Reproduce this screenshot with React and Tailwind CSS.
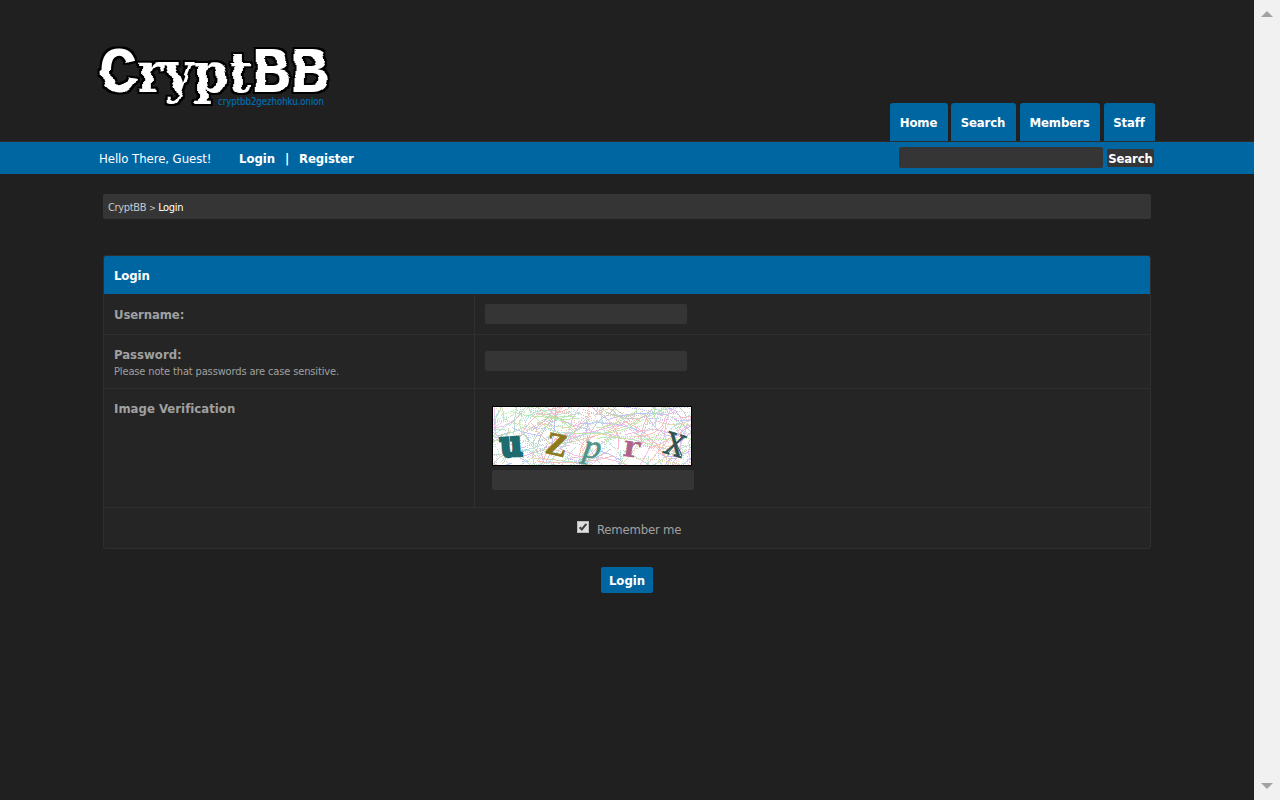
import React from "react";

const NAV = [
  { label: "Home", box: "-mr-px w-[58px]" },
  { label: "Search", box: "w-[65px]" },
  { label: "Members", box: "w-[80px]" },
  { label: "Staff", box: "w-[51px]" },
];

function Logo() {
  return (
    <svg width="250" height="80" viewBox="0 0 250 80" className="block overflow-visible">
      <defs>
        <filter id="glitch" filterUnits="userSpaceOnUse" x="0" y="0" width="250" height="80" colorInterpolationFilters="sRGB">
          <feTurbulence type="fractalNoise" baseFrequency="0.008 0.13" numOctaves="1" seed="8" result="noise" />
          <feComponentTransfer in="noise" result="n">
            <feFuncR type="discrete" tableValues="0.1 0.1 0.2 0.35 0.5 0.65 0.8 0.9 0.9" />
            <feFuncA type="linear" slope="0" intercept="1" />
          </feComponentTransfer>
          <feDisplacementMap in="SourceGraphic" in2="n" scale="8" xChannelSelector="R" yChannelSelector="A" result="shifted" />
          <feOffset in="shifted" dy="4" result="d" />
          <feMorphology in="d" operator="dilate" radius="2" result="wide" />
          <feFlood floodColor="#000" />
          <feComposite in2="wide" operator="in" result="outline" />
          <feMerge>
            <feMergeNode in="outline" />
            <feMergeNode in="d" />
          </feMerge>
        </filter>
      </defs>
      <text x="9" y="57" filter="url(#glitch)" fill="#fff" fontFamily="'Liberation Mono', monospace" fontWeight="700" fontSize="65" textLength="230" lengthAdjust="spacingAndGlyphs">
        C<tspan fontFamily="'DejaVu Serif Condensed', 'DejaVu Serif', serif" fontSize="56">rypt</tspan>BB
      </text>
      <text x="128" y="70" fontSize="10" fill="#0070b4" stroke="#0066a2" strokeWidth="0.2" fontFamily="'DejaVu Sans Condensed', 'DejaVu Sans', sans-serif" textLength="106" lengthAdjust="spacingAndGlyphs">
        cryptbb2gezhohku.onion
      </text>
    </svg>
  );
}

function makeLines() {
  let s = 77;
  const r = () => {
    s = (s * 16807) % 2147483647;
    return s / 2147483647;
  };
  const colors = ["#f9bab6", "#b2e0c2", "#b9bef8", "#f0bae4", "#b2e2e2", "#e0d4a8", "#c4c4c4", "#b8eaa6"];
  const lines = [];
  for (let i = 0; i < 360; i++) {
    const x = r() * 240 - 20;
    const y = r() * 70 - 5;
    const a = r() * Math.PI * 2;
    const len = 20 + r() * 60;
    const dx = Math.cos(a) * len;
    const dy = Math.sin(a) * len * 0.7;
    lines.push({
      d: `M${x} ${y}q${dx / 2 - 16 + r() * 32} ${dy / 2 - 16 + r() * 32} ${dx} ${dy}`,
      c: colors[Math.floor(r() * colors.length)],
      dash: i % 2 === 0 ? "1 1" : undefined,
    });
  }
  return lines;
}
const LINES = makeLines();

function Captcha() {
  return (
    <svg width="200" height="60" viewBox="0 0 200 60" className="block bg-white">
      <g fill="none" strokeWidth="0.9" shapeRendering="crispEdges">
        {LINES.map((l, i) => <path key={i} d={l.d} stroke={l.c} strokeDasharray={l.dash} />)}
      </g>
      <g fontFamily="'DejaVu Serif', serif" fontWeight="700">
        <text x="8" y="50" fontSize="35" fill="#1c6c70" stroke="#1c6c70" strokeWidth="3.2" textLength="22" lengthAdjust="spacingAndGlyphs" transform="rotate(-4 19 40)">u</text>
        <text x="54" y="49" fontSize="32" fill="#8c7a1c" stroke="#8c7a1c" strokeWidth="0.8" textLength="21" lengthAdjust="spacingAndGlyphs" transform="rotate(12 64 40)" fontFamily="'Liberation Serif', serif">Z</text>
        <text x="91" y="52" fontSize="34" fill="#4f9489" stroke="#4f9489" strokeWidth="0.5" fontStyle="italic" fontWeight="400" textLength="18" lengthAdjust="spacingAndGlyphs" transform="rotate(9 100 45)" fontFamily="'Liberation Serif', serif">p</text>
        <text x="131" y="51" fontSize="30" fill="#ad638d" textLength="17" lengthAdjust="spacingAndGlyphs" transform="rotate(8 139 43)">r</text>
        <text x="173" y="50" fontSize="31" fill="#2f5353" stroke="#2f5353" strokeWidth="0.5" fontWeight="400" textLength="20" lengthAdjust="spacingAndGlyphs" transform="rotate(17 183 39)">X</text>
        <path d="M179 26l11 24M190 31l-15 17" stroke="#2f5353" strokeWidth="1" />
      </g>
      <rect x="0.5" y="0.5" width="199" height="59" fill="none" stroke="#000" />
    </svg>
  );
}

export default function App() {
  return (
    <div className="flex h-[800px] w-[1280px] overflow-hidden bg-[#202020] font-['DejaVu_Sans_Condensed','DejaVu_Sans',sans-serif] text-[13px] leading-4 text-[#a0a0a0]">
      <div className="w-[1254px] shrink-0">
        <header className="flex h-[141px] items-end justify-between pl-[90px] pr-[99px]">
          <div className="mb-[26px]"><Logo /></div>
          <nav className="flex gap-1">
            {NAV.map((n) => (
              <a key={n.label} className={`flex h-[38px] items-center justify-center rounded-t-[3px] bg-[#0066a2] pr-px pt-[2px] font-bold tracking-[-0.1px] text-white ${n.box}`}>{n.label}</a>
            ))}
          </nav>
        </header>

        <div className="flex h-[33px] items-center border-t border-[#2c2c2c] bg-[#0066a2] pl-[99px] pr-[100px] text-white">
          <span className="w-[140px] whitespace-nowrap pt-[2px] tracking-[-0.05px]">Hello There, Guest!</span>
          <span className="w-[46px] pt-[2px] font-bold">Login</span>
          <span className="w-[14px] pt-[2px] font-bold">|</span>
          <span className="pt-[2px] font-bold tracking-[-0.1px]">Register</span>
          <div className="ml-auto flex items-center gap-1">
            <div className="mb-px h-[21px] w-[204px] rounded-[2px] bg-[#353535]" />
            <button className="flex h-[18px] w-[47px] items-center justify-center rounded-[2px] bg-[#353535] pt-px font-bold tracking-[-0.1px]">Search</button>
          </div>
        </div>

        <main className="px-[103px] pt-5">
          <div className="flex h-[25px] items-center rounded-[2px] bg-[#353535] pl-[5px] pt-[2px] text-[11px] tracking-[-0.35px]">
            <span className="whitespace-pre text-[#c8c8c8]">CryptBB <span className="text-[9px]">&gt;</span> </span>
            <span className="text-white">Login</span>
          </div>

          <section className="mt-9 h-[294px] overflow-hidden rounded-[3px] border border-[#2f2f2f] bg-[#252525]">
            <div className="flex h-[38px] items-center bg-[#0066a2] pl-[10px] pt-px font-bold tracking-[-0.1px] text-white">Login</div>
            <div className="flex h-[41px] border-b border-[#2f2f2f]">
              <div className="w-[371px] border-r border-[#2f2f2f] pl-[10px] pt-[13px] font-bold tracking-[-0.1px]">Username:</div>
              <div className="flex items-center pl-[10px]"><div className="h-5 w-[202px] rounded-[2px] bg-[#353535]" /></div>
            </div>
            <div className="flex h-[54px] border-b border-[#2f2f2f]">
              <div className="w-[371px] border-r border-[#2f2f2f] pl-[10px] pt-3">
                <div className="font-bold">Password:</div>
                <div className="pt-px text-[11px] tracking-[-0.14px]">Please note that passwords are case sensitive.</div>
              </div>
              <div className="flex items-center pb-px pl-[10px]"><div className="h-5 w-[202px] rounded-[2px] bg-[#353535]" /></div>
            </div>
            <div className="flex h-[119px] border-b border-[#2f2f2f]">
              <div className="w-[371px] border-r border-[#2f2f2f] pl-[10px] pt-3 font-bold tracking-[0.03px]">Image Verification</div>
              <div className="pl-[17px] pt-[17px]">
                <Captcha />
                <div className="mt-1 h-5 w-[202px] rounded-[2px] bg-[#353535]" />
              </div>
            </div>
            <div className="flex pl-[473px] pt-[13px]">
              <svg width="12" height="12" viewBox="0 0 12 12">
                <rect width="12" height="12" rx="1" fill="#dedede" />
                <rect x="0.5" y="0.5" width="11" height="11" rx="1" fill="none" stroke="#b9b9b9" />
                <path d="M2.7 6.2 4.8 8.5 9.4 2.8" fill="none" stroke="#404040" strokeWidth="2.1" />
              </svg>
              <span className="pl-2 pt-px tracking-[-0.2px]">Remember me</span>
            </div>
          </section>

          <button className="mx-auto mt-[18px] flex h-[26px] w-[52px] items-center justify-center rounded-[2px] bg-[#0066a2] pt-px font-bold text-white">Login</button>
        </main>
      </div>
      <div className="flex w-[26px] shrink-0 flex-col items-center justify-between bg-[#f1f1f1] py-[11px]">
        <svg width="12" height="6" viewBox="0 0 12 6"><path d="M0 6 6 0l6 6z" fill="#a3a3a3" /></svg>
        <svg width="12" height="6" viewBox="0 0 12 6"><path d="M0 0 6 6l6-6z" fill="#a3a3a3" /></svg>
      </div>
    </div>
  );
}
